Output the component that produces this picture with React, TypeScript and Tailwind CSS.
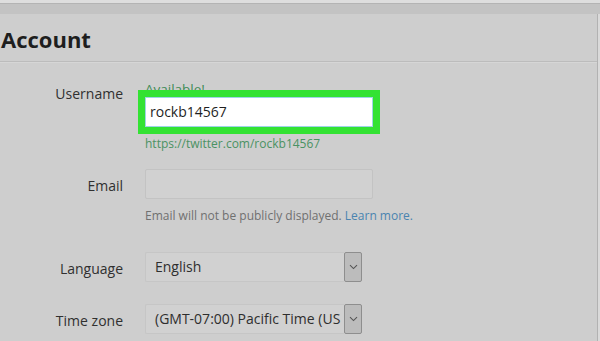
import React from "react";

function Chevron() {
  return (
    <svg width="9" height="6" viewBox="0 0 9 6" fill="none">
      <path d="M1 1.2 L4.5 4.6 L8 1.2" stroke="#555" strokeWidth="1.1" />
    </svg>
  );
}

function Select({ value }: { value: string }) {
  return (
    <div className="flex h-[30px] w-[217px]">
      <div className="flex-1 h-full overflow-hidden whitespace-nowrap bg-[#d1d1d1] border border-[#c6c6c6] border-r-0 rounded-l-[2px] pl-[9px] text-[14px] leading-[28px] text-[#2e2e2e]">
        {value}
      </div>
      <div className="w-[18px] h-full bg-[#bcbcbc] border border-[#8e8e8e] rounded-[2px] flex items-center justify-center">
        <Chevron />
      </div>
    </div>
  );
}

export default function App() {
  return (
    <div
      className="w-[600px] h-[341px] overflow-hidden bg-[#cecece] flex flex-col"
      style={{ fontFamily: '"Open Sans", "Noto Sans", sans-serif' }}
    >
      <div className="h-[3px] bg-[#dedede]" />
      <div className="h-px bg-[#b4b4b4]" />
      <div className="h-[10px] bg-[#c3c3c3]" />
      <div className="flex flex-1">
        <div className="flex-1 flex flex-col">
          <div className="h-[48px] border-b border-[#bcbcbc] pt-[12px]">
            <h1 className="text-[22px] leading-[26px] font-bold text-[#1e1e1e] pl-px">
              Account
            </h1>
          </div>
          <div className="h-px bg-[#d6d6d6]" />

          <div className="grid grid-cols-[123px_1fr] gap-x-[22px] mt-[16px]">
            {/* Username */}
            <div className="pt-[5px] text-right text-[14px] leading-[20px] text-[#303030]">
              Username
            </div>
            <div className="flex flex-col">
              <div className="text-[13.5px] leading-[16px] text-[#3f8c56] translate-y-[2px]">Available!</div>
              <div className="relative mt-[2px] h-[30px] w-[228px] bg-white border border-[#9fd3e6] outline outline-[7px] outline-[#33e233] pl-[4px] text-[14px] leading-[28px] text-[#1f1f1f]">
                rockb14567
              </div>
              <div className="mt-[9px] text-[12px] leading-[16px] text-[#4a9263]">
                https://twitter.com/rockb14567
              </div>
            </div>

            {/* Email */}
            <div className="mt-[17px] pt-[7px] text-right text-[14px] leading-[20px] text-[#303030]">
              Email
            </div>
            <div className="mt-[17px] flex flex-col">
              <div className="h-[30px] w-[228px] bg-[#d1d1d1] border border-[#c3c3c3] rounded-[2px]" />
              <div className="mt-[9px] text-[12px] leading-[16px] text-[#707070] whitespace-nowrap">
                Email will not be publicly displayed.{" "}
                <span className="text-[#4a84b0]">Learn more.</span>
              </div>
            </div>

            {/* Language */}
            <div className="mt-[28px] pt-[7px] text-right text-[14px] leading-[20px] text-[#303030]">
              Language
            </div>
            <div className="mt-[28px]">
              <Select value="English" />
            </div>

            {/* Time zone */}
            <div className="mt-[22px] pt-[7px] text-right text-[14px] leading-[20px] text-[#303030]">
              Time zone
            </div>
            <div className="mt-[22px]">
              <Select value="(GMT-07:00) Pacific Time (US" />
            </div>
          </div>
        </div>
        <div className="w-px bg-[#b2b2b2]" />
        <div className="w-[2px] bg-[#dadada]" />
      </div>
    </div>
  );
}
